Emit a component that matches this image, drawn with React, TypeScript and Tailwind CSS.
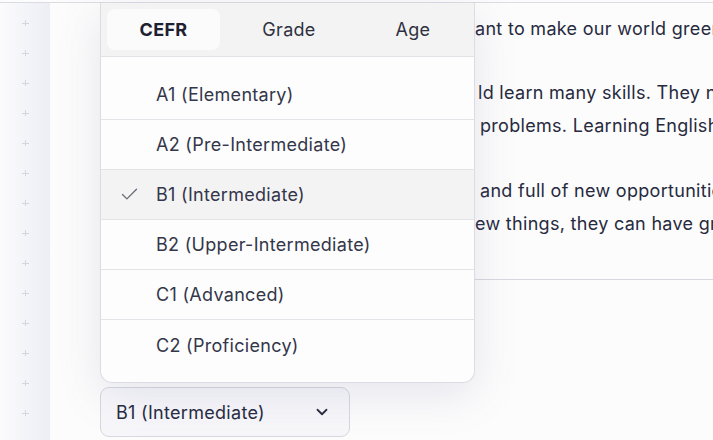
import { Check, ChevronDown } from "lucide-react";

const levels = [
  "A1 (Elementary)",
  "A2 (Pre-Intermediate)",
  "B1 (Intermediate)",
  "B2 (Upper-Intermediate)",
  "C1 (Advanced)",
  "C2 (Proficiency)",
];

const selected = "B1 (Intermediate)";

function Gutter() {
  const marks = Array.from({ length: 14 });
  return (
    <div className="w-[50px] shrink-0 bg-gradient-to-r from-[#fbfbfc] to-[#eceef5] flex flex-col items-center pt-[17px] gap-[24px]">
      {marks.map((_, i) => (
        <div key={i} className="relative w-[7px] h-[6px]">
          <div className="absolute left-0 top-[2.5px] w-[7px] h-px bg-[#d4d5de]" />
          <div className="absolute left-[3px] top-0 w-px h-[6px] bg-[#d4d5de]" />
        </div>
      ))}
    </div>
  );
}

export default function App() {
  return (
    <div
      className="w-[713px] h-[440px] overflow-hidden bg-[#fcfcfc] pt-[2px]"
      style={{ fontFamily: "Inter, 'Noto Sans', sans-serif" }}
    >
      <div className="flex h-full border-t border-[#dadbe3]">
        <Gutter />
        <main className="relative flex-1 min-w-0 bg-[#fcfcfc] text-[#272a3e] tracking-[0.3px]">
          <div className="ml-[50px]">
            {/* article text */}
            <div className="pt-[9px] text-[18px] leading-[33px] whitespace-nowrap overflow-hidden">
              <p className="pl-[375px] mb-[31px]">ant to make our world greener.</p>
              <p className="mb-[32px]">
                <span className="block pl-[378px]">ld learn many skills. They need</span>
                <span className="block pl-[380px]">problems. Learning English</span>
              </p>
              <p>
                <span className="block pl-[380px]">and full of new opportunities.</span>
                <span className="block pl-[375px]">ew things, they can have great</span>
              </p>
            </div>
            <div className="mt-[39px] border-t border-[#d7d8df]" />

            {/* level picker */}
            <div className="mt-[107px] w-[250px] h-[50px] rounded-[9px] border border-[#d6d7df] bg-[#f7f7fa] flex items-center justify-between pl-[15px] pr-[18px] text-[18px] text-[#262a40]">
              <span>{selected}</span>
              <ChevronDown size={18} strokeWidth={2.4} className="text-[#2a2c3c]" />
            </div>
          </div>

          {/* open level menu */}
          <div className="absolute left-[50px] top-0 w-[375px] h-[380px] bg-[#fdfdfd] border border-t-0 border-[#dcdce3] rounded-b-[12px] overflow-hidden shadow-[0_12px_44px_rgba(110,115,160,0.16)]">
            <div className="h-[54px] bg-[#f3f3f4] border-b border-[#e3e3e7] flex items-center pl-[6px] text-[18px]">
              <div className="w-[113px] h-[41px] rounded-[8px] bg-[#fbfbfb] flex items-center justify-center font-bold text-[#1f2130]">
                CEFR
              </div>
              <div className="w-[138px] flex justify-center text-[#2e3040]">Grade</div>
              <div className="w-[110px] flex justify-center text-[#2e3040]">Age</div>
            </div>
            <ul className="pt-[13px]">
              {levels.map((lvl, i) => {
                const active = lvl === selected;
                return (
                  <li
                    key={lvl}
                    className={`h-[50px] flex items-center text-[18px] text-[#34364a] ${
                      i < levels.length - 1 ? "border-b border-[#e4e4e8]" : ""
                    } ${active ? "bg-[#f3f3f4]" : ""}`}
                  >
                    <span className="w-[55px] flex justify-center pl-[2px]">
                      {active && <Check size={21} strokeWidth={1.6} className="text-[#6c6e7c]" />}
                    </span>
                    <span>{lvl}</span>
                  </li>
                );
              })}
            </ul>
          </div>
        </main>
      </div>
    </div>
  );
}
